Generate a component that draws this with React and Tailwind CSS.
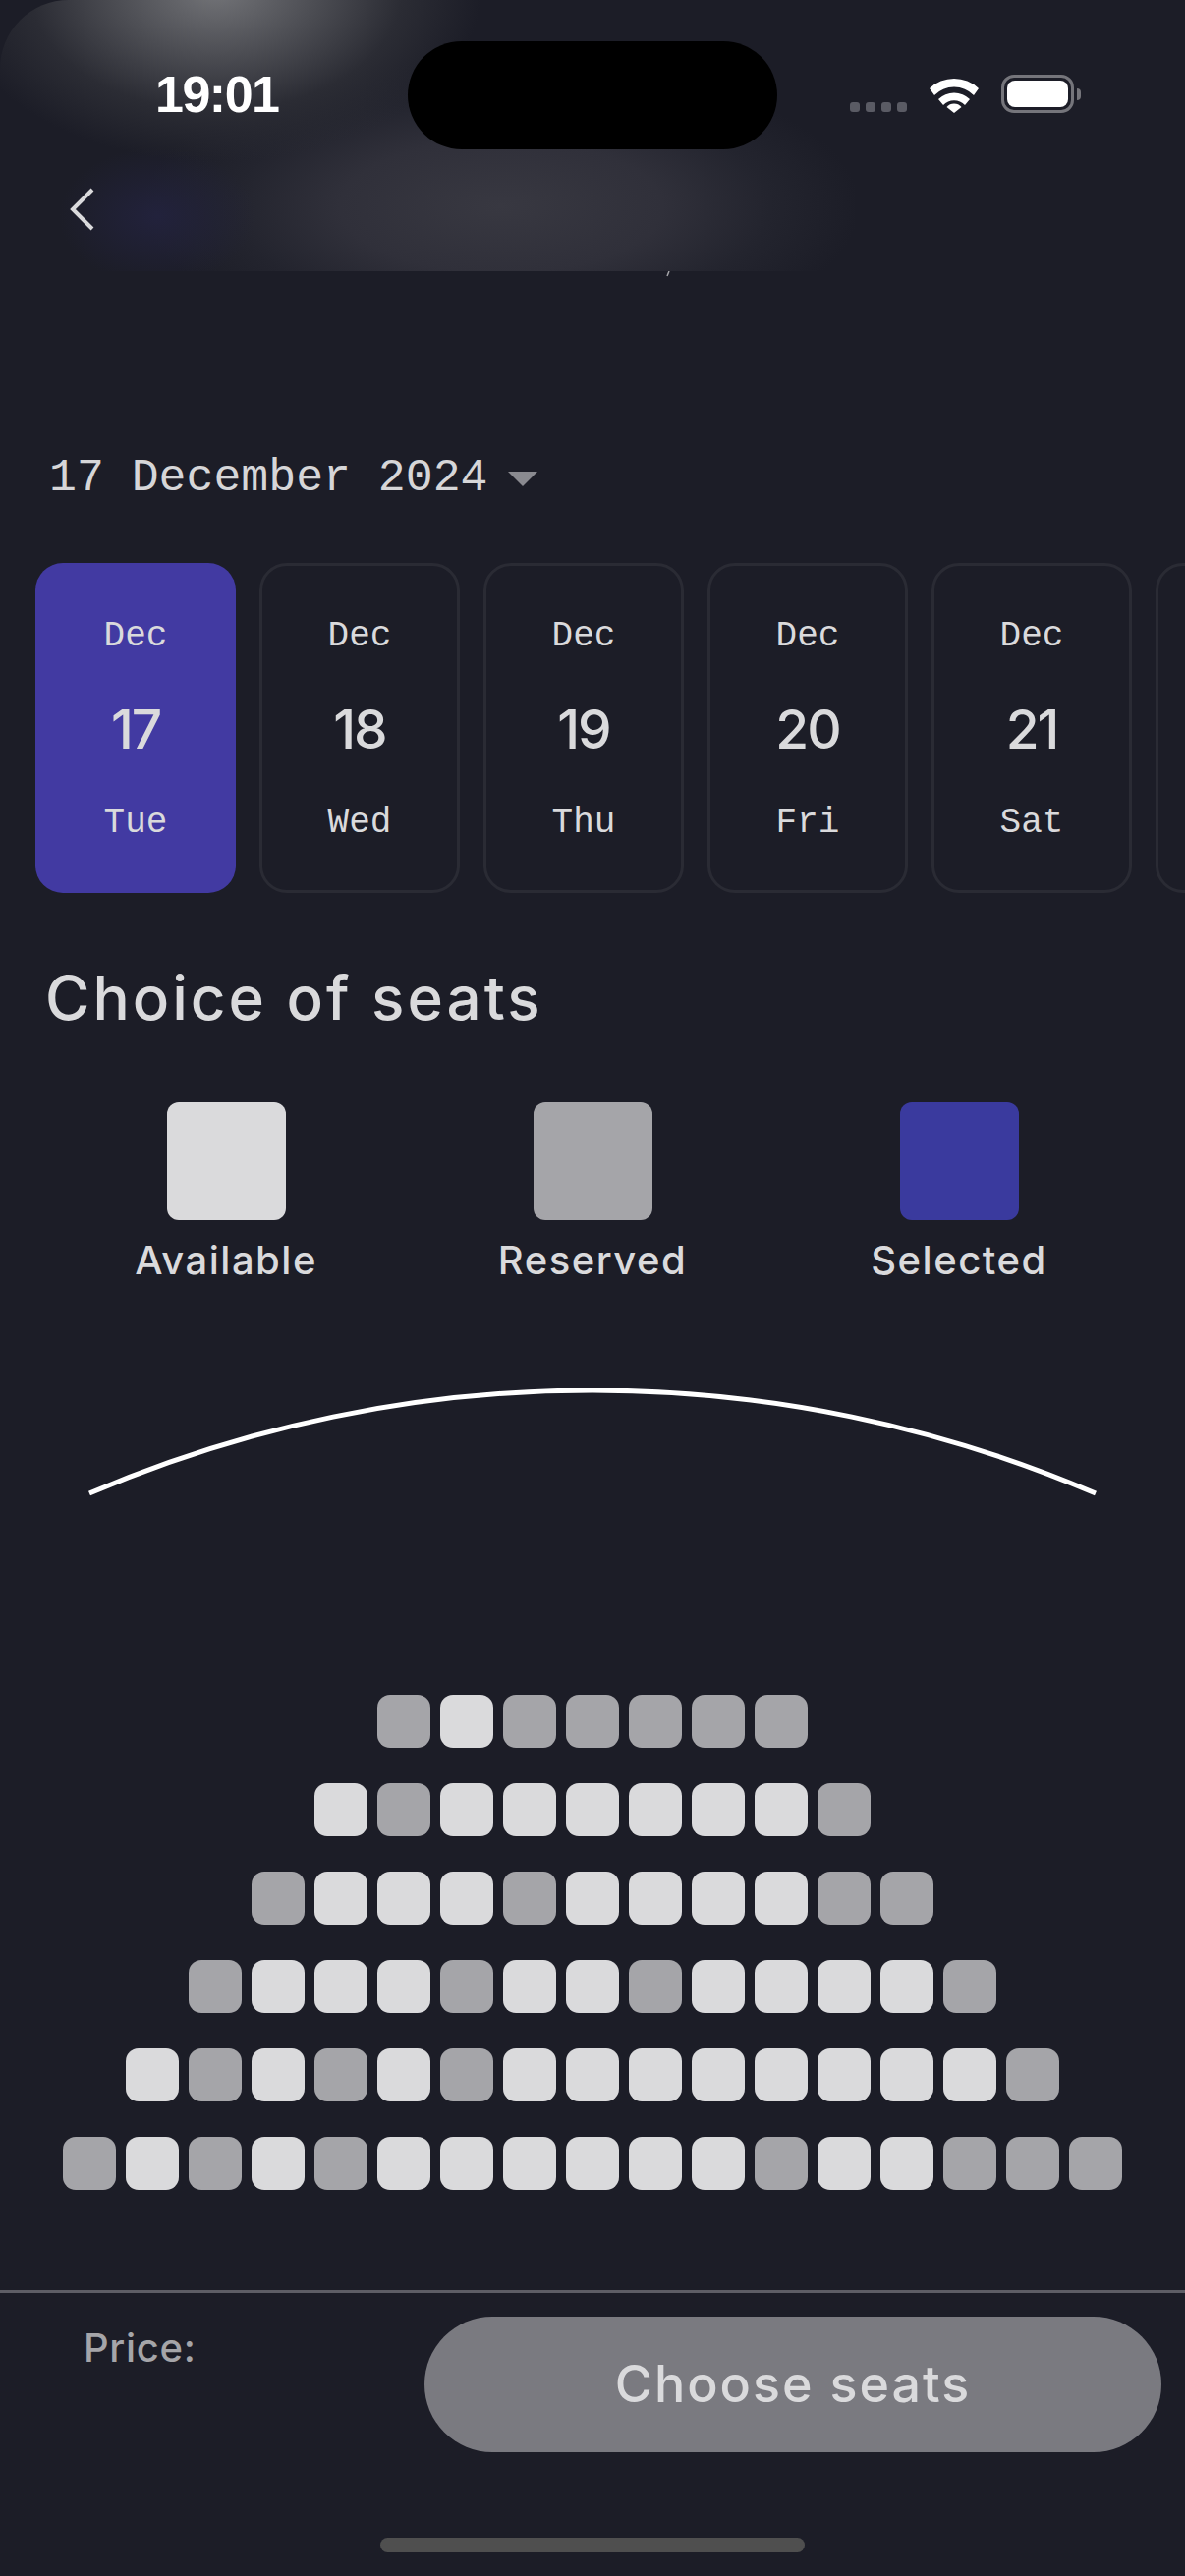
import React from 'react';

const UI_FONT = "font-['Inter','Liberation_Sans',sans-serif]";
const MONO_FONT = "font-['Liberation_Mono','DejaVu_Sans_Mono',monospace]";

const DAYS = [
  { day: '17', name: 'Tue', active: true },
  { day: '18', name: 'Wed' },
  { day: '19', name: 'Thu' },
  { day: '20', name: 'Fri' },
  { day: '21', name: 'Sat' },
];

// a = available, r = reserved
const ROWS = [
  'rarrrrr',
  'araaaaaar',
  'raaaraaaarr',
  'raaaraaraaaar',
  'arararaaaaaaaar',
  'rararaaaaaaraarrr',
];

const LEGEND = [
  { label: 'Available', color: 'bg-[#dadadc]' },
  { label: 'Reserved', color: 'bg-[#a5a5a9]' },
  { label: 'Selected', color: 'bg-[#3a3a9e]' },
];

const StatusIcons = () => (
  <div className="flex items-end ml-[74px] mt-[34px] h-[39px]">
    <div className="flex gap-[6px] mb-[1px]">
      {[0, 1, 2, 3].map((i) => (
        <span key={i} className="w-[10px] h-[10px] rounded-[3px] bg-[#5a5b64]" />
      ))}
    </div>
    <svg width="52" height="38" viewBox="0 0 52 38" className="ml-[22px]">
      <path d="M1 13 A36 36 0 0 1 51 13 L46 20 A28 28 0 0 0 6 20 Z" fill="#fff" />
      <path d="M10 24 A23 23 0 0 1 42 24 L37 30 A15 15 0 0 0 15 30 Z" fill="#fff" />
      <path d="M18.500 32 A10 10 0 0 1 33.500 32 L26 38 Z" fill="#fff" />
    </svg>
    <div className="flex items-center ml-[22px]">
      <div className="w-[74px] h-[39px] rounded-[13px] border-[3px] border-[#75757b] p-[3px]">
        <div className="w-full h-full rounded-[8px] bg-white" />
      </div>
      <span className="w-[4px] h-[12px] ml-[3px] rounded-r-full bg-[#75757b]" />
    </div>
  </div>
);

const DateCard = ({ day, name, active }) => (
  <div
    className={`w-[204px] h-[336px] shrink-0 rounded-[28px] flex flex-col items-center text-[#dadadc] ${
      active ? 'bg-[#423aa2] pt-[55px]' : 'border-[3px] border-[#2a2b34] pt-[52px]'
    }`}
  >
    <span className={`${MONO_FONT} text-[36px] leading-[40px]`}>Dec</span>
    <span className={`${UI_FONT} text-[55px] leading-[60px] font-medium mt-[44px] tracking-[-2px]`}>{day}</span>
    <span className={`${MONO_FONT} text-[36px] leading-[40px] mt-[46px]`}>{name}</span>
  </div>
);

const SeatRow = ({ row }) => (
  <div className="flex justify-center gap-[10px]">
    {row.split('').map((s, i) => (
      <div key={i} className={`w-[54px] h-[54px] rounded-[13px] ${s === 'a' ? 'bg-[#dadadc]' : 'bg-[#a5a5a9]'}`} />
    ))}
  </div>
);

export default function App() {
  return (
    <div className="w-[1206px] h-[2622px] overflow-hidden bg-[#1c1d27] flex flex-col">
      {/* status bar and blurred header */}
      <div className="relative h-[276px] shrink-0">
        <div className="absolute left-[40px] top-[60px] w-[830px] h-[216px] bg-[radial-gradient(ellipse_365px_150px_at_470px_150px,#383841_0%,#30303a_45%,#23242e_75%,#1c1d2700_100%)]" />
        <div className="absolute left-[60px] top-[150px] w-[200px] h-[126px] bg-[radial-gradient(ellipse_100px_70px_at_100px_70px,#22223c_0%,#1c1d2700_100%)]" />
        <div className="absolute left-0 top-0 w-[520px] h-[190px] rounded-tl-[70px] bg-[radial-gradient(ellipse_270px_175px_at_220px_-10px,#737478_0%,#4c4d53_38%,#2b2c34_70%,#1c1d2700_100%)]" />
        <div className="relative flex pt-[42px]">
          <div className="w-[415px] pl-[158px] pt-[24px] font-['Liberation_Sans',sans-serif] text-[52px] leading-[60px] font-bold text-white tracking-[-1.500px]">
            19:01
          </div>
          <div className="w-[376px] h-[110px] rounded-[55px] bg-black" />
          <StatusIcons />
        </div>
        <div className="relative pl-[71px] mt-[39px]">
          <svg width="25" height="44" viewBox="0 0 25 44">
            <path d="M23 2 L3 22 L23 42" fill="none" stroke="#dadadc" strokeWidth="4" />
          </svg>
        </div>
      </div>
      <svg width="10" height="6" viewBox="0 0 10 6" className="ml-[677px] shrink-0">
        <path d="M4 0 L2 5" stroke="#a5a5a9" strokeWidth="1.500" />
      </svg>

      {/* date picker */}
      <div className={`flex items-center pl-[50px] mt-[180px] h-[50px] ${MONO_FONT} text-[46.500px] text-[#d6d6d8]`}>
        <span className="leading-[50px]">17 December 2024</span>
        <span className="ml-[21px] w-0 h-0 border-l-[15px] border-r-[15px] border-t-[15px] border-l-transparent border-r-transparent border-t-[#8a8a90]" />
      </div>
      <div className="flex gap-[24px] pl-[36px] mt-[61px]">
        {DAYS.map((d) => (
          <DateCard key={d.day} {...d} />
        ))}
        <div className="w-[204px] h-[336px] shrink-0 rounded-[28px] border-[3px] border-[#2a2b34]" />
      </div>

      {/* seats */}
      <h2 className={`${UI_FONT} text-[62px] leading-[70px] font-medium tracking-[3px] text-[#dadadc] pl-[46px] mt-[72px]`}>
        Choice of seats
      </h2>
      <div className="flex justify-center gap-[252px] mt-[71px]">
        {LEGEND.map((l) => (
          <div key={l.label} className="w-[121px] flex flex-col items-center">
            <div className={`w-[121px] h-[120px] rounded-[12px] ${l.color}`} />
            <span className={`${UI_FONT} text-[40px] leading-[50px] font-medium tracking-[1.500px] text-[#dadadc] mt-[16px] whitespace-nowrap`}>
              {l.label}
            </span>
          </div>
        ))}
      </div>
      <svg width="1206" height="112" viewBox="0 0 1206 112" className="mt-[105px] shrink-0">
        <path d="M91 107 A1301 1301 0 0 1 1115 107" fill="none" stroke="#fff" strokeWidth="5" />
      </svg>
      <div className="flex flex-col gap-[36px] mt-[200px]">
        {ROWS.map((r, i) => (
          <SeatRow key={i} row={r} />
        ))}
      </div>

      {/* footer */}
      <div className="h-[3px] bg-[#5e5e66] mt-[102px] shrink-0" />
      <div className="flex justify-between pl-[85px] pr-[24px] pt-[24px]">
        <span className={`${UI_FONT} text-[40px] leading-[50px] font-medium tracking-[0.700px] text-[#a5a5a9] mt-[7px]`}>Price:</span>
        <button className={`w-[750px] h-[138px] rounded-full bg-[#7a7a80] ${UI_FONT} text-[52px] font-medium tracking-[2px] text-[#dadadc]`}>
          Choose seats
        </button>
      </div>
      <div className="w-[432px] h-[15px] rounded-full bg-[#4f4f4f] mx-auto mt-[87px]" />
    </div>
  );
}
